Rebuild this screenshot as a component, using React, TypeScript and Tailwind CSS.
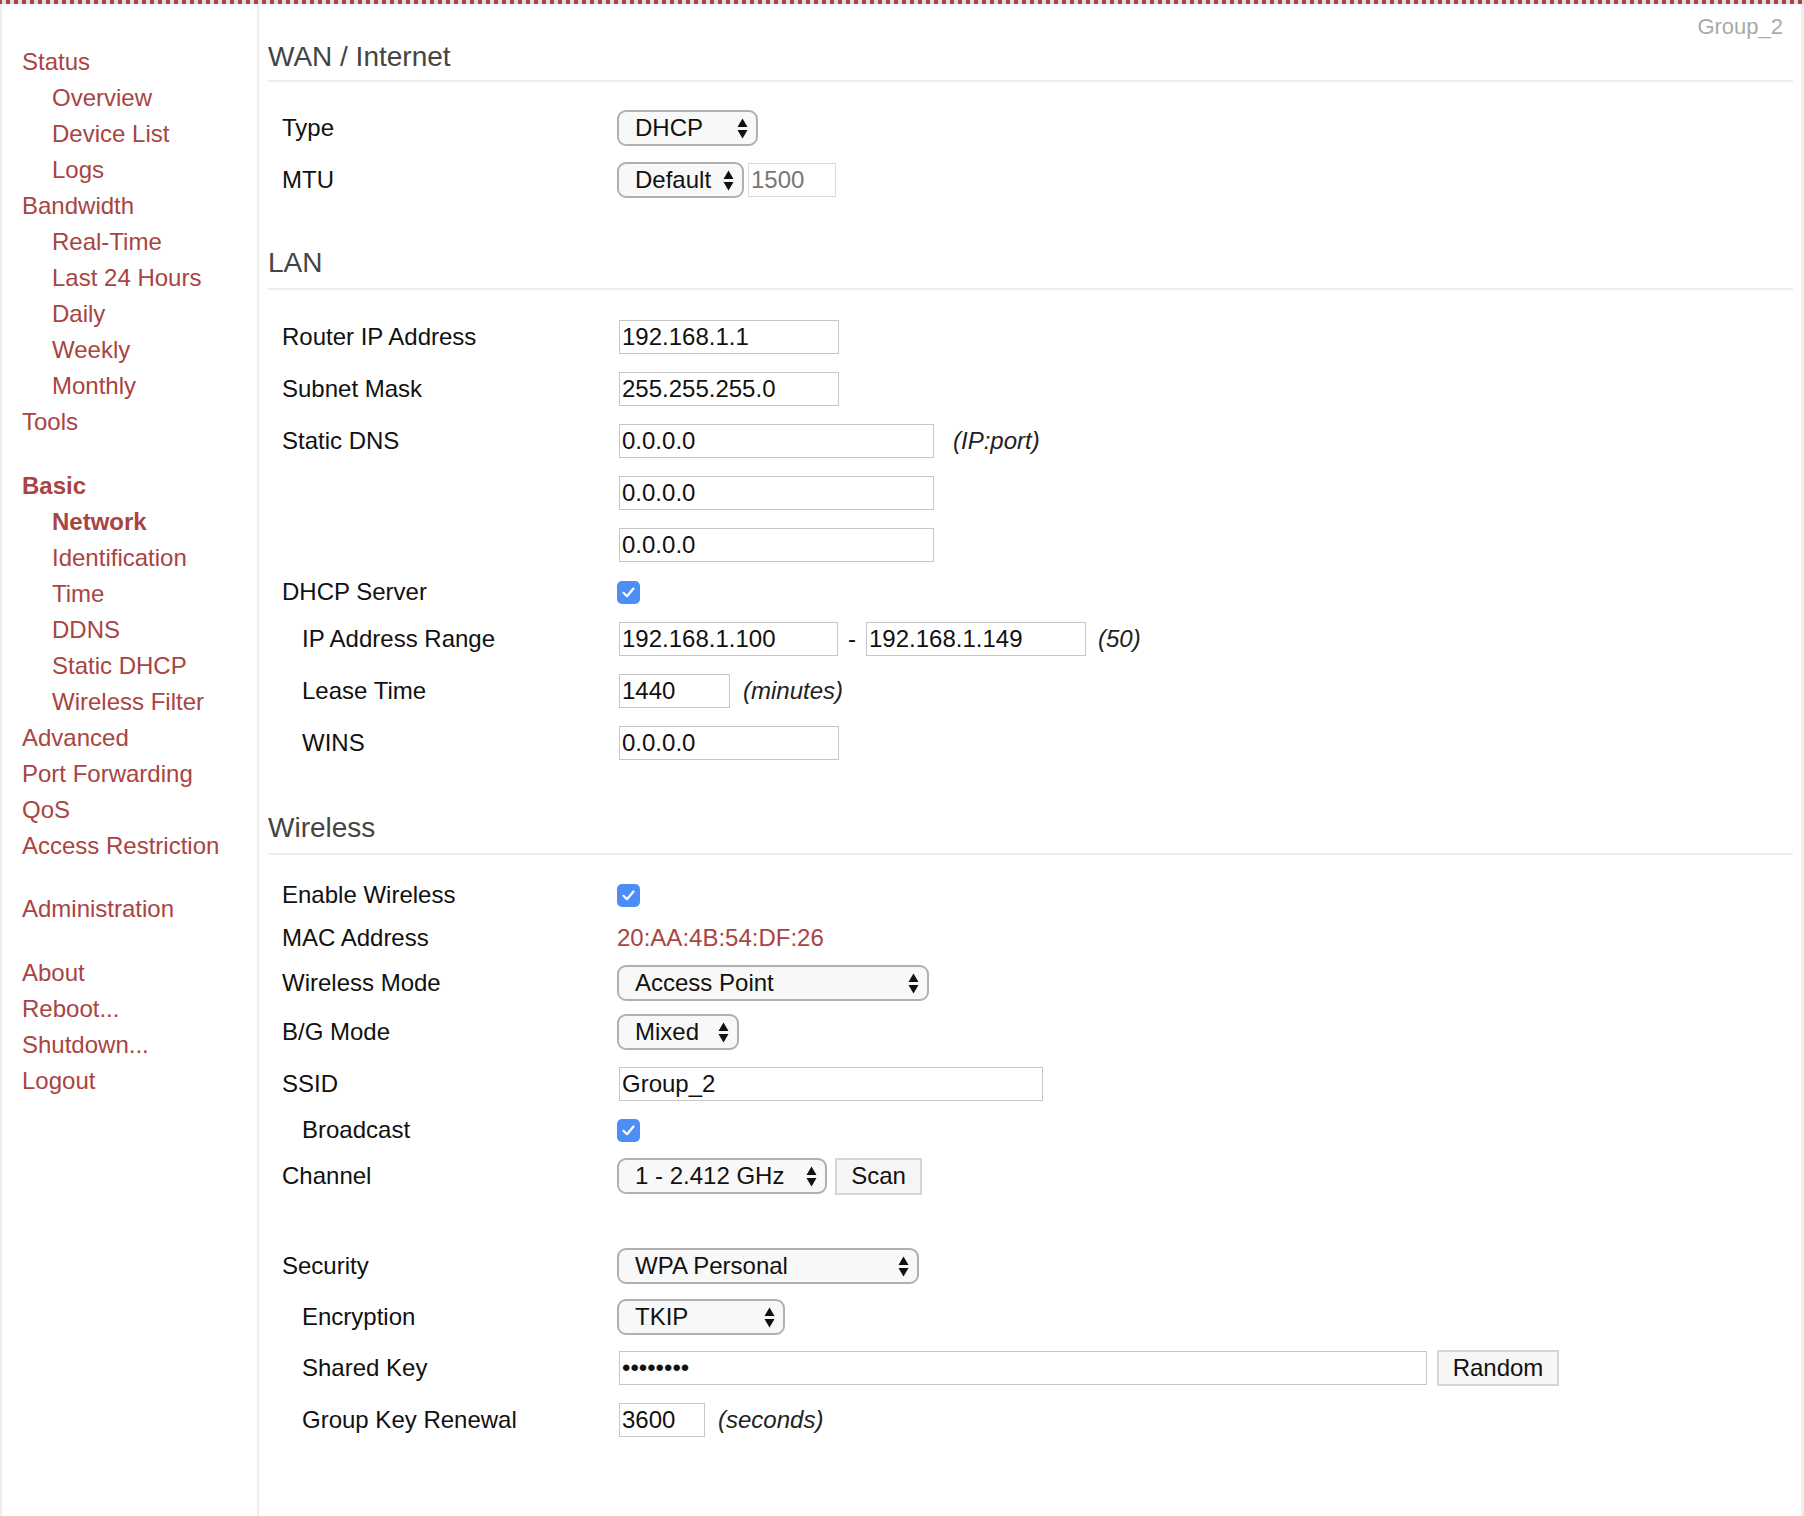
import React from "react";

const FONT = "font-['Liberation_Sans',Arial,Helvetica,sans-serif]";

function Arrows() {
  return (
    <svg width="11" height="21" viewBox="0 0 11 21" className="shrink-0">
      <path d="M5.5 0.5 L10.5 9 L0.5 9 Z" fill="#111" />
      <path d="M5.5 20.5 L10.5 12 L0.5 12 Z" fill="#111" />
    </svg>
  );
}

function Select({ value, w }: { value: string; w: string }) {
  return (
    <div
      className={`${w} h-[36px] rounded-[9px] border-2 border-[#b0b0b0] bg-[#f8f8f8] pl-[16px] pr-[8px] flex items-center justify-between text-[24px] text-[#111]`}
    >
      <span className="whitespace-nowrap">{value}</span>
      <Arrows />
    </div>
  );
}

function TextInput({ value, w, muted }: { value: string; w: string; muted?: boolean }) {
  return (
    <input
      readOnly
      defaultValue={value}
      className={`${w} h-[34px] border ${muted ? "border-[#dcdcdc] text-[#777]" : "border-[#c6c6c6] text-[#111]"} bg-white px-[2px] text-[24px] outline-none ${FONT}`}
    />
  );
}

function Check() {
  return (
    <div className="w-[23px] h-[23px] rounded-[5px] bg-[#4c8ef6] flex items-center justify-center">
      <svg width="15" height="15" viewBox="0 0 15 15">
        <path d="M2.5 7.8 L6 11.2 L12.5 3.5" fill="none" stroke="#fff" strokeWidth="2.2" strokeLinecap="round" strokeLinejoin="round" />
      </svg>
    </div>
  );
}

function Btn({ label, w, h }: { label: string; w: string; h: string }) {
  return (
    <div className={`${w} ${h} border-2 border-[#d6d6d6] bg-[#f6f6f6] flex items-center justify-center text-[24px] text-[#111]`}>
      {label}
    </div>
  );
}

function Note({ children, ml }: { children: React.ReactNode; ml: string }) {
  return <span className={`${ml} italic text-[24px] text-[#222] whitespace-nowrap`}>{children}</span>;
}

function Row({
  label,
  indent,
  h,
  children,
}: {
  label: string;
  indent?: boolean;
  h: string;
  children?: React.ReactNode;
}) {
  return (
    <div className={`flex items-center ${h}`}>
      <div className={`w-[349px] shrink-0 ${indent ? "pl-[34px]" : "pl-[14px]"} text-[24px] text-[#111]`}>{label}</div>
      <div className="flex items-center">{children}</div>
    </div>
  );
}

function Heading({ children, mt, pb }: { children: React.ReactNode; mt: string; pb: string }) {
  return (
    <div className={`${mt} ${pb} leading-[34px] text-[28px] text-[#444] border-b-2 border-[#eeeeee]`}>{children}</div>
  );
}

function NavItem({ label, sub, bold }: { label: string; sub?: boolean; bold?: boolean }) {
  return (
    <div
      className={`leading-[36px] text-[24px] text-[#a94442] whitespace-nowrap ${sub ? "pl-[30px]" : ""} ${bold ? "font-bold" : ""}`}
    >
      {label}
    </div>
  );
}

export default function App() {
  return (
    <div className={`min-h-[1516px] flex flex-col bg-white ${FONT}`}>
      <div className="h-[4px] bg-[repeating-linear-gradient(90deg,#a94442_0px,#a94442_2px,#dedede_2px,#dedede_6px,#a94442_6px,#a94442_8px)]" />
      <div className="flex flex-1 border-l-2 border-r-[3px] border-[#eeeeee]">
        <aside className="w-[257px] shrink-0 border-r-2 border-[#eeeeee] pl-[20px] pt-[40px]">
          <NavItem label="Status" />
          <NavItem label="Overview" sub />
          <NavItem label="Device List" sub />
          <NavItem label="Logs" sub />
          <NavItem label="Bandwidth" />
          <NavItem label="Real-Time" sub />
          <NavItem label="Last 24 Hours" sub />
          <NavItem label="Daily" sub />
          <NavItem label="Weekly" sub />
          <NavItem label="Monthly" sub />
          <NavItem label="Tools" />
          <div className="mt-[28px]">
            <NavItem label="Basic" bold />
            <NavItem label="Network" sub bold />
            <NavItem label="Identification" sub />
            <NavItem label="Time" sub />
            <NavItem label="DDNS" sub />
            <NavItem label="Static DHCP" sub />
            <NavItem label="Wireless Filter" sub />
            <NavItem label="Advanced" />
            <NavItem label="Port Forwarding" />
            <NavItem label="QoS" />
            <NavItem label="Access Restriction" />
          </div>
          <div className="mt-[27px]">
            <NavItem label="Administration" />
          </div>
          <div className="mt-[28px]">
            <NavItem label="About" />
            <NavItem label="Reboot..." />
            <NavItem label="Shutdown..." />
            <NavItem label="Logout" />
          </div>
        </aside>

        <main className="flex-1 pl-[9px] pr-[8px]">
          <div className="mt-[10px] h-[26px] leading-[26px] text-right pr-[10px] text-[22px] text-[#aaaaaa]">Group_2</div>

          <Heading mt="mt-0" pb="pb-[6px]">WAN / Internet</Heading>
          <div className="mt-[20px]">
            <Row label="Type" h="h-[52px]">
              <Select value="DHCP" w="w-[141px]" />
            </Row>
            <Row label="MTU" h="h-[52px]">
              <Select value="Default" w="w-[127px]" />
              <div className="ml-[4px]">
                <TextInput value="1500" w="w-[88px]" muted />
              </div>
            </Row>
          </div>

          <Heading mt="mt-[40px]" pb="pb-[8px]">LAN</Heading>
          <div className="mt-[21px]">
            <Row label="Router IP Address" h="h-[52px]">
              <div className="ml-[2px]"><TextInput value="192.168.1.1" w="w-[220px]" /></div>
            </Row>
            <Row label="Subnet Mask" h="h-[52px]">
              <div className="ml-[2px]"><TextInput value="255.255.255.0" w="w-[220px]" /></div>
            </Row>
            <Row label="Static DNS" h="h-[52px]">
              <div className="ml-[2px]"><TextInput value="0.0.0.0" w="w-[315px]" /></div>
              <Note ml="ml-[19px]">(IP:port)</Note>
            </Row>
            <Row label="" h="h-[52px]">
              <div className="ml-[2px]"><TextInput value="0.0.0.0" w="w-[315px]" /></div>
            </Row>
            <Row label="" h="h-[52px]">
              <div className="ml-[2px]"><TextInput value="0.0.0.0" w="w-[315px]" /></div>
            </Row>
            <Row label="DHCP Server" h="h-[42px]">
              <Check />
            </Row>
            <Row label="IP Address Range" indent h="h-[52px]">
              <div className="ml-[2px]"><TextInput value="192.168.1.100" w="w-[219px]" /></div>
              <span className="px-[10px] text-[24px] text-[#111]">-</span>
              <TextInput value="192.168.1.149" w="w-[220px]" />
              <Note ml="ml-[12px]">(50)</Note>
            </Row>
            <Row label="Lease Time" indent h="h-[52px]">
              <div className="ml-[2px]"><TextInput value="1440" w="w-[111px]" /></div>
              <Note ml="ml-[13px]">(minutes)</Note>
            </Row>
            <Row label="WINS" indent h="h-[52px]">
              <div className="ml-[2px]"><TextInput value="0.0.0.0" w="w-[220px]" /></div>
            </Row>
          </div>

          <Heading mt="mt-[42px]" pb="pb-[8px]">Wireless</Heading>
          <div className="mt-[19px]">
            <Row label="Enable Wireless" h="h-[42px]">
              <Check />
            </Row>
            <Row label="MAC Address" h="h-[44px]">
              <span className="text-[24px] text-[#a94442]">20:AA:4B:54:DF:26</span>
            </Row>
            <Row label="Wireless Mode" h="h-[46px]">
              <Select value="Access Point" w="w-[312px]" />
            </Row>
            <Row label="B/G Mode" h="h-[52px]">
              <Select value="Mixed" w="w-[122px]" />
            </Row>
            <Row label="SSID" h="h-[52px]">
              <div className="ml-[2px]"><TextInput value="Group_2" w="w-[424px]" /></div>
            </Row>
            <Row label="Broadcast" indent h="h-[40px]">
              <Check />
            </Row>
            <Row label="Channel" h="h-[52px]">
              <Select value="1 - 2.412 GHz" w="w-[210px]" />
              <div className="ml-[8px]">
                <Btn label="Scan" w="w-[87px]" h="h-[37px]" />
              </div>
            </Row>
          </div>
          <div className="mt-[38px]">
            <Row label="Security" h="h-[52px]">
              <Select value="WPA Personal" w="w-[302px]" />
            </Row>
            <Row label="Encryption" indent h="h-[50px]">
              <Select value="TKIP" w="w-[168px]" />
            </Row>
            <Row label="Shared Key" indent h="h-[52px]">
              <div className="ml-[2px] w-[808px] h-[34px] border border-[#c6c6c6] bg-white px-[2px] flex items-center text-[24px] text-[#111] leading-none">
                ••••••••
              </div>
              <div className="ml-[10px]">
                <Btn label="Random" w="w-[122px]" h="h-[36px]" />
              </div>
            </Row>
            <Row label="Group Key Renewal" indent h="h-[52px]">
              <div className="ml-[2px]"><TextInput value="3600" w="w-[86px]" /></div>
              <Note ml="ml-[13px]">(seconds)</Note>
            </Row>
          </div>
        </main>
      </div>
    </div>
  );
}
